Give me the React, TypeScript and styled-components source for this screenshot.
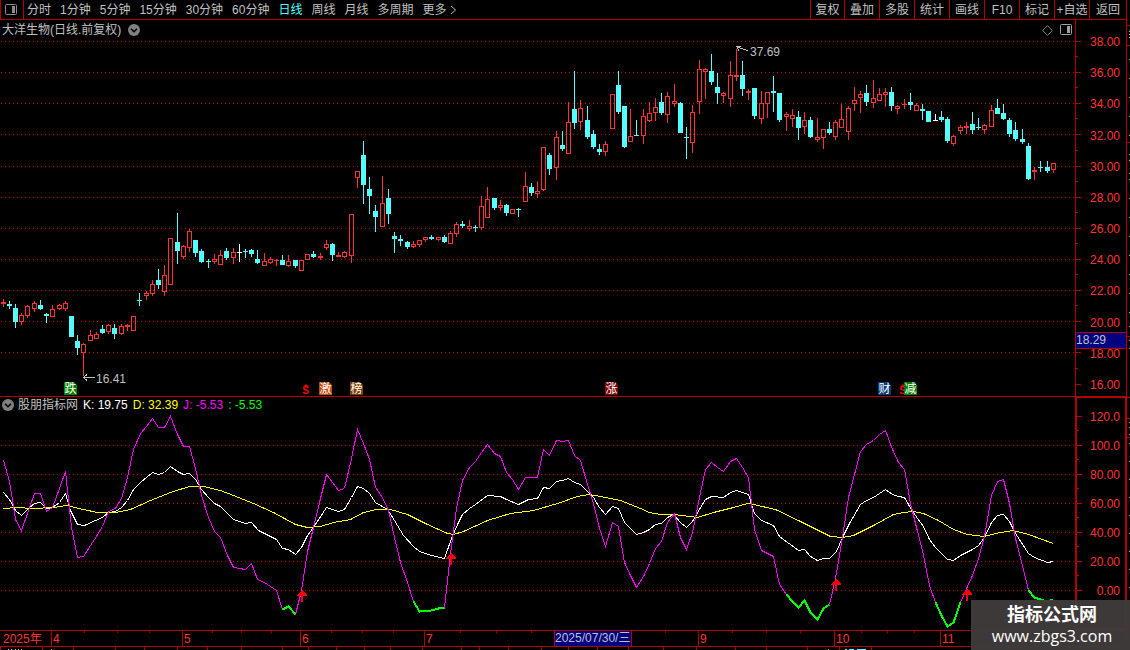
import React from "react";
import styled, { createGlobalStyle } from "styled-components";

const LINE = "#b40000";
const RED = "#ff3232";
const CYAN = "#54ffff";
const GREY = "#c0c0c0";
const NAVY = "#000080";

const GlobalStyle = createGlobalStyle`
  * { box-sizing: border-box; }
  html, body { margin: 0; background: #000; }
  body {
    font-family: "Liberation Sans", "Noto Sans CJK SC", sans-serif;
    font-size: 12px;
    line-height: 14px;
    color: ${GREY};
    overflow: hidden;
  }
`;

/* ---------- data ---------- */

type Kind = "r" | "c" | "w";
type Bar = [number, Kind, number, number, number, number];

// x, kind, high, body top, body bottom, low
const BARS: Bar[] = [
  [3, "r", 299, 302, 304, 307], [9, "c", 301, 304, 306, 309], [15, "c", 304, 308, 322, 328], [21, "r", 313, 315, 322, 325],
  [27, "r", 305, 306, 316, 318], [34, "r", 301, 303, 309, 312], [40, "c", 300, 305, 309, 310], [46, "c", 313, 314, 316, 323],
  [52, "r", 305, 309, 317, 317], [59, "r", 304, 305, 309, 310], [65, "r", 301, 303, 309, 311], [71, "c", 316, 316, 337, 337],
  [77, "c", 335, 341, 348, 355], [83, "r", 343, 344, 353, 376], [90, "r", 330, 335, 341, 341], [96, "r", 332, 334, 339, 339],
  [102, "c", 325, 329, 333, 334], [108, "r", 324, 325, 332, 334], [114, "c", 324, 328, 334, 339], [121, "r", 324, 326, 334, 335],
  [127, "r", 324, 325, 327, 331], [133, "r", 316, 316, 331, 331], [139, "c", 293, 300, 301, 306], [146, "r", 291, 293, 296, 300],
  [152, "r", 280, 284, 294, 296], [158, "c", 269, 280, 285, 289], [164, "r", 265, 275, 292, 296], [170, "r", 238, 238, 285, 285],
  [177, "c", 213, 242, 251, 264], [183, "r", 245, 246, 257, 259], [189, "r", 229, 231, 248, 252], [195, "c", 240, 240, 253, 257],
  [201, "c", 249, 251, 262, 263], [208, "c", 259, 261, 262, 268], [214, "r", 254, 259, 262, 264], [220, "r", 250, 255, 265, 265],
  [226, "c", 248, 251, 258, 260], [233, "r", 248, 252, 258, 264], [239, "w", 244, 252, 253, 262], [245, "c", 249, 251, 252, 258],
  [251, "c", 249, 250, 254, 257], [257, "c", 250, 259, 263, 264], [264, "r", 253, 261, 266, 266], [270, "r", 257, 259, 263, 264],
  [276, "r", 259, 260, 261, 266], [282, "c", 255, 260, 265, 265], [288, "r", 255, 261, 266, 267], [295, "c", 260, 260, 266, 268],
  [301, "r", 260, 260, 271, 271], [307, "r", 254, 254, 260, 260], [313, "c", 251, 254, 257, 258], [320, "r", 253, 256, 258, 260],
  [326, "r", 240, 244, 248, 250], [332, "c", 243, 244, 255, 261], [338, "r", 252, 255, 257, 257], [344, "r", 251, 252, 257, 258],
  [351, "r", 214, 214, 256, 263], [357, "r", 171, 171, 178, 188], [363, "c", 141, 155, 185, 204], [369, "c", 177, 189, 196, 214],
  [375, "c", 205, 211, 217, 232], [382, "r", 176, 203, 227, 227], [388, "c", 189, 198, 214, 224], [394, "c", 232, 236, 239, 253],
  [400, "c", 235, 239, 241, 246], [407, "c", 241, 242, 247, 249], [413, "r", 241, 244, 247, 248], [419, "r", 240, 240, 245, 247],
  [425, "r", 237, 237, 240, 242], [431, "c", 235, 237, 239, 240], [438, "r", 237, 237, 240, 241], [444, "c", 235, 237, 242, 243],
  [450, "r", 231, 233, 244, 244], [456, "r", 222, 224, 234, 237], [462, "c", 221, 224, 226, 228], [469, "r", 220, 226, 229, 231],
  [475, "c", 225, 227, 228, 232], [481, "r", 196, 206, 228, 230], [487, "r", 187, 199, 218, 218], [494, "c", 198, 198, 208, 210],
  [500, "r", 200, 205, 208, 211], [506, "c", 204, 205, 213, 216], [512, "r", 209, 209, 214, 214], [518, "c", 208, 209, 210, 217],
  [525, "r", 172, 186, 202, 202], [531, "c", 183, 187, 193, 196], [537, "r", 181, 191, 194, 198], [543, "r", 147, 147, 190, 191],
  [549, "c", 153, 155, 169, 175], [556, "r", 131, 137, 168, 180], [562, "c", 131, 145, 149, 151], [568, "r", 102, 122, 154, 154],
  [574, "c", 71, 109, 123, 129], [580, "r", 100, 108, 122, 130], [587, "c", 106, 120, 137, 139], [593, "c", 130, 134, 147, 149],
  [599, "c", 144, 149, 152, 155], [605, "r", 141, 144, 152, 156], [612, "r", 94, 94, 129, 129], [618, "c", 71, 85, 112, 114],
  [624, "c", 106, 106, 147, 148], [630, "r", 109, 136, 142, 142], [636, "c", 120, 135, 136, 136], [643, "r", 109, 116, 136, 144],
  [649, "r", 102, 113, 121, 122], [655, "r", 98, 107, 113, 121], [661, "c", 93, 102, 113, 115], [667, "r", 92, 96, 115, 123],
  [674, "r", 84, 101, 104, 107], [680, "c", 102, 103, 133, 133], [686, "c", 127, 137, 138, 159], [692, "r", 105, 112, 143, 153],
  [699, "r", 60, 69, 102, 114], [705, "r", 68, 69, 72, 99], [711, "c", 54, 71, 82, 85], [717, "c", 73, 87, 93, 104],
  [723, "r", 92, 93, 96, 103], [730, "r", 61, 75, 99, 107], [736, "r", 49, 75, 77, 81], [742, "c", 61, 75, 89, 96],
  [748, "r", 89, 91, 93, 100], [754, "c", 88, 88, 116, 119], [761, "r", 91, 103, 119, 124], [767, "r", 92, 92, 104, 118],
  [773, "c", 76, 91, 93, 112], [779, "c", 93, 93, 120, 122], [786, "r", 112, 114, 117, 131], [792, "r", 109, 115, 119, 127],
  [798, "c", 111, 117, 128, 140], [804, "r", 112, 120, 127, 134], [810, "c", 117, 120, 137, 138], [817, "r", 118, 137, 140, 142],
  [823, "r", 129, 129, 138, 149], [829, "c", 122, 129, 133, 135], [835, "r", 120, 122, 137, 140], [841, "r", 104, 119, 128, 128],
  [848, "r", 106, 108, 132, 140], [854, "r", 87, 100, 104, 111], [860, "r", 91, 94, 98, 113], [866, "c", 85, 93, 102, 106],
  [873, "r", 80, 98, 103, 108], [879, "r", 88, 94, 101, 101], [885, "r", 88, 92, 95, 107], [891, "c", 87, 92, 106, 111],
  [897, "r", 105, 106, 109, 114], [904, "r", 99, 104, 105, 109], [910, "c", 93, 102, 105, 110], [916, "r", 103, 105, 111, 111],
  [922, "c", 104, 109, 111, 120], [928, "c", 111, 111, 122, 122], [935, "w", 114, 120, 121, 121], [941, "c", 111, 117, 120, 122],
  [947, "c", 117, 119, 141, 143], [953, "r", 135, 136, 144, 146], [960, "r", 125, 127, 131, 134], [966, "r", 122, 126, 128, 134],
  [972, "c", 112, 124, 130, 134], [978, "c", 118, 127, 128, 130], [984, "r", 124, 125, 130, 134], [991, "r", 105, 110, 127, 127],
  [997, "c", 99, 108, 114, 114], [1003, "c", 104, 113, 119, 120], [1009, "c", 118, 120, 134, 137], [1015, "c", 122, 130, 139, 141],
  [1022, "c", 129, 139, 142, 144], [1028, "c", 143, 146, 179, 180], [1034, "r", 167, 170, 172, 180], [1040, "c", 161, 167, 168, 172],
  [1047, "c", 161, 167, 171, 173], [1053, "r", 163, 163, 170, 173],
];

type Point = [number, number];

const J: Point[] = [
  [3, 460], [9, 481], [15, 519], [21, 530], [28, 510], [34, 493], [40, 493], [46, 511], [52, 507], [59, 488], [65, 471], [71, 527],
  [77, 557], [83, 556], [90, 545], [96, 536], [102, 526], [108, 511], [115, 508], [121, 498], [127, 477], [133, 449], [140, 433],
  [146, 426], [152, 418], [158, 427], [164, 427], [170, 416], [177, 434], [183, 446], [189, 446], [195, 468], [201, 495], [208, 517],
  [214, 531], [220, 537], [227, 555], [233, 567], [239, 568], [245, 569], [251, 563], [257, 579], [264, 582], [270, 586], [276, 590],
  [282, 609], [288, 606], [295, 614], [301, 590], [307, 551], [313, 527], [320, 498], [326, 474], [332, 482], [338, 490], [344, 488],
  [351, 458], [357, 429], [363, 443], [369, 459], [375, 487], [382, 497], [388, 510], [394, 537], [400, 562], [407, 582], [413, 601],
  [419, 611], [431, 610], [438, 608], [444, 607], [450, 553], [456, 508], [462, 480], [469, 467], [475, 461], [481, 452], [487, 444],
  [494, 453], [500, 456], [506, 472], [512, 479], [518, 489], [525, 477], [537, 477], [543, 449], [549, 455], [556, 440], [562, 441],
  [568, 440], [574, 455], [580, 460], [587, 484], [593, 503], [599, 528], [605, 546], [612, 522], [618, 526], [624, 562], [630, 575],
  [636, 587], [643, 576], [649, 563], [655, 548], [661, 541], [667, 522], [674, 513], [680, 537], [686, 549], [692, 532], [699, 497],
  [705, 469], [711, 462], [717, 467], [723, 471], [730, 461], [736, 458], [742, 467], [748, 477], [754, 529], [761, 550], [767, 553],
  [773, 556], [779, 584], [786, 594], [792, 601], [798, 607], [804, 600], [810, 612], [817, 619], [823, 608], [829, 604], [835, 578],
  [842, 537], [848, 497], [854, 474], [860, 451], [866, 444], [873, 440], [879, 434], [885, 430], [892, 449], [898, 462], [904, 469],
  [910, 503], [916, 527], [922, 550], [929, 585], [935, 602], [941, 615], [947, 626], [953, 622], [960, 602], [966, 588], [972, 575],
  [978, 558], [984, 536], [991, 495], [997, 481], [1003, 479], [1009, 503], [1015, 538], [1022, 565], [1028, 590], [1034, 597],
  [1040, 599], [1047, 601], [1053, 599],
];

const K: Point[] = [
  [3, 492], [9, 499], [15, 510], [21, 515], [28, 508], [34, 503], [40, 502], [46, 508], [52, 507], [59, 502], [65, 493], [70, 510],
  [77, 524], [84, 525], [95, 520], [102, 517], [108, 512], [115, 511], [121, 507], [127, 500], [133, 489], [140, 482], [152, 472],
  [158, 474], [164, 472], [170, 466], [177, 471], [183, 474], [189, 473], [195, 479], [201, 489], [208, 497], [214, 503], [220, 506],
  [233, 519], [245, 523], [251, 522], [258, 530], [276, 539], [282, 548], [288, 549], [295, 554], [301, 547], [307, 535], [313, 527],
  [326, 507], [338, 511], [344, 509], [351, 497], [357, 486], [363, 488], [369, 493], [375, 502], [387, 509], [394, 520], [403, 535],
  [413, 546], [419, 551], [431, 555], [444, 558], [451, 538], [457, 524], [462, 514], [469, 508], [475, 504], [487, 495], [500, 496],
  [506, 499], [518, 504], [528, 499], [537, 498], [543, 487], [549, 488], [556, 481], [562, 480], [568, 478], [574, 482], [580, 484],
  [587, 491], [593, 497], [599, 507], [605, 514], [612, 506], [618, 508], [624, 522], [636, 534], [643, 532], [649, 529], [655, 524],
  [661, 523], [667, 517], [673, 514], [680, 522], [686, 527], [692, 521], [699, 509], [705, 499], [711, 496], [723, 497], [730, 492],
  [736, 490], [748, 494], [754, 513], [761, 520], [773, 525], [779, 536], [798, 550], [804, 549], [810, 556], [817, 560], [823, 558],
  [829, 558], [836, 551], [842, 537], [849, 523], [860, 504], [866, 500], [873, 497], [885, 489], [892, 494], [898, 496], [904, 497],
  [912, 511], [923, 526], [929, 539], [935, 547], [947, 559], [953, 560], [960, 555], [972, 549], [978, 545], [984, 537], [991, 522],
  [997, 515], [1003, 514], [1009, 521], [1015, 533], [1028, 553], [1034, 557], [1047, 562], [1053, 561],
];

const D: Point[] = [
  [3, 508], [16, 507], [33, 508], [53, 507], [66, 505], [83, 509], [97, 512], [115, 512], [130, 509], [150, 500], [170, 492],
  [189, 486], [203, 486], [220, 490], [233, 495], [253, 503], [273, 512], [295, 524], [307, 527], [320, 526], [333, 522], [350, 519],
  [363, 512], [376, 509], [390, 509], [407, 514], [427, 524], [447, 533], [453, 534], [463, 531], [487, 520], [510, 513], [533, 510],
  [557, 503], [577, 496], [588, 494], [600, 496], [620, 500], [640, 508], [649, 512], [660, 514], [673, 514], [697, 517], [713, 512],
  [733, 507], [747, 503], [753, 504], [775, 509], [800, 521], [830, 536], [842, 537], [853, 535], [873, 525], [893, 514], [903, 512],
  [913, 511], [923, 513], [938, 520], [953, 529], [967, 534], [983, 536], [1000, 532], [1013, 530], [1028, 534], [1053, 543],
];

const OVERSOLD: [number, number][] = [[282, 295], [413, 444], [786, 829], [935, 960], [1028, 1053]];
const SIGNALS: Point[] = [[302, 590], [451, 553], [836, 579], [967, 589]];

const PRICE_GRID = [41, 72, 103, 134, 166, 197, 228, 259, 290, 321, 352, 384];
const PRICE_LABELS = ["38.00", "36.00", "34.00", "32.00", "30.00", "28.00", "26.00", "24.00", "22.00", "20.00", "18.00", "16.00"];
const KDJ_GRID = [416, 445, 474, 503, 532, 561, 590];
const KDJ_LABELS = ["120.0", "100.0", "80.00", "60.00", "40.00", "20.00", "0.00"];

const PERIODS = ["分时", "1分钟", "5分钟", "15分钟", "30分钟", "60分钟", "日线", "周线", "月线", "多周期"];
const TOOLS = ["复权", "叠加", "多股", "统计", "画线", "F10", "标记", "+自选", "返回"];

const WEEK_TICKS = [84, 117, 149, 212, 241, 271, 331, 362, 393, 460, 496, 531, 665, 732, 766, 800, 861, 887, 914];
const FOOT_TICKS = [0, 42, 73, 115, 144, 177, 207, 241, 282, 308, 336, 364, 390, 422, 461, 479, 508, 541, 568, 597, 628, 663, 696, 735, 766, 807, 839, 871];
const EDGE_LINES = [25, 45, 142, 336, 397, 418, 437];
const EDGE_MARKS = [31, 34, 37, 59, 78, 97, 116, 135, 154, 160, 173, 179, 198, 217, 236, 255, 274, 293, 312, 326, 340, 348, 422, 427, 434, 443, 461, 479, 497, 515, 533, 551, 569, 587];

/* ---------- layout ---------- */

const Screen = styled.div`
  display: grid;
  grid-template-columns: minmax(0, 1fr) 52px 3px;
  grid-template-rows: 20px minmax(0, 376fr) minmax(0, 234fr) 16px 4px;
  height: 100vh;
  min-height: 400px;
  background: #000;
  position: relative;
`;

const Header = styled.header`
  grid-column: 1 / 3;
  display: flex;
  justify-content: space-between;
  border: 1px solid ${LINE};
  border-top: 0;
`;

const Periods = styled.nav`
  display: flex;
  align-items: center;
  gap: 9px;
`;

const PlainButton = styled.button<{ $active?: boolean }>`
  display: flex;
  align-items: center;
  gap: 3px;
  margin: 0;
  padding: 0;
  border: 0;
  background: none;
  font: inherit;
  white-space: nowrap;
  color: ${(p) => (p.$active ? CYAN : GREY)};
  cursor: pointer;
`;

const SideToggle = styled(PlainButton)`
  width: 23px;
  height: 19px;
  margin-right: -6px;
  padding-right: 2px;
  justify-content: center;
  border-right: 1px solid ${LINE};
`;

const Tools = styled.nav`
  display: flex;
`;

const ToolButton = styled(PlainButton)`
  width: 35px;
  justify-content: center;
  border-left: 1px solid ${LINE};
  &:first-child { width: 34px; }
  &:last-child { width: 37px; }
`;

const Pane = styled.section<{ $divided?: boolean }>`
  position: relative;
  min-width: 0;
  ${(p) => p.$divided && `border-top: 1px solid ${LINE};`}
`;

const Plot = styled.svg`
  position: absolute;
  inset: 0;
  width: 100%;
  height: 100%;
  display: block;
`;

const TitleBar = styled.div<{ $gap: number }>`
  position: relative;
  display: flex;
  align-items: center;
  gap: ${(p) => p.$gap}px;
  padding: 2px 2px 0;
  line-height: 16px;
  white-space: nowrap;
`;

const IndicatorBar = styled(TitleBar)`
  padding-top: 0;
`;

const Readings = styled.div`
  display: flex;
  gap: 5px;
  padding-left: 1px;
`;

const Spacer = styled.span`
  flex: 1;
`;

const Reading = styled.span<{ $color: string }>`
  color: ${(p) => p.$color};
`;

const Axis = styled.div<{ $selected?: boolean }>`
  position: relative;
  display: flex;
  flex-direction: column;
  justify-content: space-between;
  align-items: flex-end;
  color: ${RED};
  border: solid ${LINE};
  border-width: ${(p) => (p.$selected ? "2px" : "0 1px")};
  padding: ${(p) => (p.$selected ? "12px 5px 30px 0" : "15px 6px 4px 0")};
`;

const PriceCursor = styled.output`
  position: absolute;
  left: 0;
  right: 0;
  top: 83%;
  height: 17px;
  line-height: 15px;
  color: ${GREY};
  background: ${NAVY};
  border: solid ${LINE};
  border-width: 1px 0;
`;

const Overlay = styled.span<{ $x: number; $y: number }>`
  position: absolute;
  left: ${(p) => (p.$x / 1075) * 100}%;
  top: ${(p) => ((p.$y - 20) / 376) * 100}%;
  white-space: nowrap;
`;

const Badge = styled(Overlay)<{ $bg: string }>`
  width: 13px;
  height: 13px;
  line-height: 14px;
  text-align: center;
  color: #fff;
  background: ${(p) => p.$bg};
  clip-path: polygon(0 0, 10px 0, 13px 3px, 13px 13px, 0 13px);
`;

const Dollar = styled(Overlay)`
  width: 7px;
  font-size: 10px;
  line-height: 10px;
  font-weight: bold;
  color: #f00;
  text-align: center;
  padding-top: 2px;
  &::before {
    content: "";
    position: absolute;
    top: 0;
    left: 1px;
    border: solid transparent;
    border-width: 0 3px 3px;
    border-bottom-color: #f00;
  }
`;

const Timeline = styled.div`
  position: relative;
  grid-column: 1 / 3;
  display: grid;
  grid-template-columns: 51fr 131fr 118fr 124fr 130fr 78fr 66fr 136fr 106fr 186fr;
  border: solid ${LINE};
  border-width: 1px 1px 0 0;
  color: ${RED};
  line-height: 16px;
`;

const Month = styled.span`
  padding-left: 1px;
  border-left: 1px solid ${LINE};
  white-space: nowrap;
  &:first-child { border-left: 0; padding-left: 3px; }
`;

const CursorDate = styled(Month)`
  color: ${GREY};
  background: ${NAVY};
  background-clip: padding-box;
  border-right: 1px solid ${LINE};
  padding-left: 0;
  line-height: 14px;
`;

const Footer = styled.div`
  position: relative;
  grid-column: 1 / 3;
  border-top: 1px solid ${LINE};
`;

const Edge = styled.aside`
  position: relative;
  grid-column: 3;
  grid-row: 1 / 6;
`;

const Watermark = styled.a`
  position: absolute;
  right: 0;
  bottom: 0;
  width: 159px;
  height: 50px;
  padding: 4px 0 0 3px;
  display: flex;
  flex-direction: column;
  align-items: center;
  gap: 1px;
  background: rgba(64, 59, 59, 0.96);
  color: #fff;
  text-decoration: none;
`;

const SiteName = styled.strong`
  font: bold 18px/22px "Liberation Sans", "Noto Sans CJK SC", sans-serif;
`;

const SiteUrl = styled.span`
  font: 16px/18px "Open Sans", "Noto Sans", sans-serif;
`;

/* ---------- icons ---------- */

const PanelIcon = ({ color = "#8c8c8c" }: { color?: string }) => (
  <svg width="13" height="12" viewBox="0 0 13 12" aria-hidden>
    <rect x="0.5" y="0.5" width="11" height="10" rx="1" fill="none" stroke={color} />
    <rect x="7" y="2" width="3" height="7" fill={color} />
  </svg>
);

const FoldIcon = () => (
  <svg width="12" height="12" viewBox="0 0 12 12" aria-hidden>
    <circle cx="6" cy="6" r="6" fill="#808080" />
    <path d="M3 4.7 6 7.7 9 4.7" fill="none" stroke="#000" strokeWidth="1.6" />
  </svg>
);

const DiamondIcon = () => (
  <svg width="11" height="11" viewBox="0 0 11 11" aria-hidden>
    <path d="M5.5 0.7 10.3 5.5 5.5 10.3 0.7 5.5Z" fill="none" stroke="#8c8c8c" />
  </svg>
);

/* ---------- drawing parts ---------- */

const Candle = ({ bar: [x, kind, high, top, bottom, low] }: { bar: Bar }) => {
  const color = kind === "r" ? RED : kind === "c" ? CYAN : "#fff";
  const hollow = kind === "r" && bottom - top > 2;
  return (
    <g fill={color}>
      {top > high && <rect x={x} y={high} width="1" height={top - high} />}
      {low > bottom && <rect x={x} y={bottom} width="1" height={low - bottom} />}
      {hollow ? (
        <rect x={x - 1.5} y={top + 0.5} width="4" height={bottom - top - 1} fill="none" stroke={color} />
      ) : (
        <rect x={x - 2} y={top} width="5" height={bottom - top} />
      )}
    </g>
  );
};

const GridLines = ({ rows }: { rows: number[] }) => (
  <g stroke="#b00000" strokeDasharray="1 3">
    {rows.map((y) => (
      <line key={y} x1="1" x2="1075" y1={y + 0.5} y2={y + 0.5} />
    ))}
  </g>
);

const Curve = ({ points, color, width = 1 }: { points: Point[]; color: string; width?: number }) => (
  <polyline
    fill="none"
    stroke={color}
    strokeWidth={width}
    points={points.map(([x, y]) => `${x + 0.5},${y + 0.5}`).join(" ")}
  />
);

const AxisTicks = ({ rows, box }: { rows: number[]; box: string }) => (
  <Plot viewBox={box} preserveAspectRatio="none" shapeRendering="crispEdges" aria-hidden>
    <g fill={LINE}>
      {rows.map((y, i) => (
        <React.Fragment key={y}>
          <rect x="0" y={y} width="5" height="1" />
          {i < rows.length - 1 && <rect x="0" y={Math.floor((y + rows[i + 1]) / 2)} width="2" height="1" />}
        </React.Fragment>
      ))}
    </g>
  </Plot>
);

export default function App() {
  return (
    <>
      <GlobalStyle />
      <Screen>
        <Header>
          <Periods aria-label="周期">
            <SideToggle aria-label="侧栏">
              <PanelIcon />
            </SideToggle>
            {PERIODS.map((p) => (
              <PlainButton key={p} $active={p === "日线"}>{p}</PlainButton>
            ))}
            <PlainButton>
              更多
              <svg width="7" height="10" viewBox="0 0 7 10" aria-hidden>
                <path d="M1 1 5.5 5 1 9" fill="none" stroke={GREY} />
              </svg>
            </PlainButton>
          </Periods>
          <Tools aria-label="工具">
            {TOOLS.map((t) => (
              <ToolButton key={t}>{t}</ToolButton>
            ))}
          </Tools>
        </Header>

        <Pane>
          <Plot viewBox="0 20 1075 376" preserveAspectRatio="none" shapeRendering="crispEdges" aria-hidden>
            <GridLines rows={PRICE_GRID.slice(0, -1)} />
            {BARS.map((bar) => (
              <Candle key={bar[0]} bar={bar} />
            ))}
            <g fill="none" stroke={GREY}>
              <path d="M83 377.5H95M83.5 377.5 87 374.5M83.5 377.5 87 380.5" />
              <path d="M736.5 46.5 741 48.5 748 50.5M736.5 46.5H741M736.5 46.5 739 50.5" />
            </g>
          </Plot>
          <TitleBar $gap={7}>
            <span>大洋生物(日线.前复权)</span>
            <PlainButton aria-label="展开"><FoldIcon /></PlainButton>
            <Spacer />
            <PlainButton aria-label="标注"><DiamondIcon /></PlainButton>
            <PlainButton aria-label="面板"><PanelIcon color="#a0a0a0" /></PlainButton>
          </TitleBar>
          <Overlay $x={96} $y={372}>16.41</Overlay>
          <Overlay $x={750} $y={45}>37.69</Overlay>
          <Badge $x={64} $y={382} $bg="#008000">跌</Badge>
          <Dollar $x={302} $y={384}>S</Dollar>
          <Badge $x={319} $y={382} $bg="#c04800">激</Badge>
          <Badge $x={350} $y={382} $bg="#804000">榜</Badge>
          <Badge $x={605} $y={382} $bg="#800000">涨</Badge>
          <Badge $x={878} $y={382} $bg="#003c78">财</Badge>
          <Dollar $x={899} $y={384}>S</Dollar>
          <Badge $x={904} $y={382} $bg="#008000">减</Badge>
        </Pane>
        <Axis>
          <AxisTicks rows={PRICE_GRID} box="0 20 50 376" />
          {PRICE_LABELS.map((l) => (
            <span key={l}>{l}</span>
          ))}
          <PriceCursor>18.29</PriceCursor>
        </Axis>

        <Pane $divided>
          <Plot viewBox="0 397 1075 233" preserveAspectRatio="none" shapeRendering="crispEdges" aria-hidden>
            <GridLines rows={KDJ_GRID.slice(1)} />
            <Curve points={K} color="#fff" />
            <Curve points={D} color="#ff0" />
            <Curve points={J} color="#f0f" />
            {OVERSOLD.map(([from, to]) => (
              <Curve key={from} points={J.filter(([x]) => x >= from && x <= to)} color="#0f0" width={2} />
            ))}
            {SIGNALS.map(([x, y]) => (
              <path key={x} fill="#f00" d={`M${x} ${y}l5 5v1h-4v6h-2v-6h-4v-1z`} />
            ))}
          </Plot>
          <IndicatorBar $gap={4}>
            <PlainButton aria-label="展开指标"><FoldIcon /></PlainButton>
            <span>股朋指标网</span>
            <Readings>
              <Reading $color="#fff">K: 19.75</Reading>
              <Reading $color="#ff0">D: 32.39</Reading>
              <Reading $color="#f0f">J: -5.53</Reading>
              <Reading $color="#0f0">: -5.53</Reading>
            </Readings>
          </IndicatorBar>
        </Pane>
        <Axis $selected>
          <AxisTicks rows={KDJ_GRID} box="0 398 48 230" />
          {KDJ_LABELS.map((l) => (
            <span key={l}>{l}</span>
          ))}
        </Axis>

        <Timeline>
          <Month>2025年</Month>
          <Month>4</Month>
          <Month>5</Month>
          <Month>6</Month>
          <Month>7</Month>
          <CursorDate>2025/07/30/三</CursorDate>
          <span />
          <Month>9</Month>
          <Month>10</Month>
          <Month>11</Month>
          <Plot viewBox="0 631 1126 15" preserveAspectRatio="none" shapeRendering="crispEdges" aria-hidden>
            {WEEK_TICKS.map((x) => (
              <rect key={x} x={x} y="631" width="1" height="2" fill={LINE} />
            ))}
          </Plot>
        </Timeline>
        <Footer>
          <Plot viewBox="0 647 1127 3" preserveAspectRatio="none" shapeRendering="crispEdges" aria-hidden>
            {FOOT_TICKS.map((x) => (
              <rect key={x} x={x} y="647" width="1" height="3" fill={LINE} />
            ))}
            <path d="M8 649.5h1m2 0h1m3 0h1m2 0h1m2 0h1m29 0h1M828 649.5h1" stroke={GREY} />
            <path d="M845 649.5h2m2 0h5m3 0h9" stroke={CYAN} />
          </Plot>
        </Footer>

        <Edge>
          <Plot viewBox="0 0 3 650" preserveAspectRatio="none" shapeRendering="crispEdges" aria-hidden>
            {EDGE_LINES.map((y) => (
              <rect key={y} x="0" y={y} width="3" height="1" fill={LINE} />
            ))}
            {EDGE_MARKS.map((y) => (
              <rect key={y} x="2" y={y} width="1" height="1" fill={GREY} />
            ))}
          </Plot>
        </Edge>

        <Watermark href="#">
          <SiteName>指标公式网</SiteName>
          <SiteUrl>www.zbgs3.com</SiteUrl>
        </Watermark>
      </Screen>
    </>
  );
}
